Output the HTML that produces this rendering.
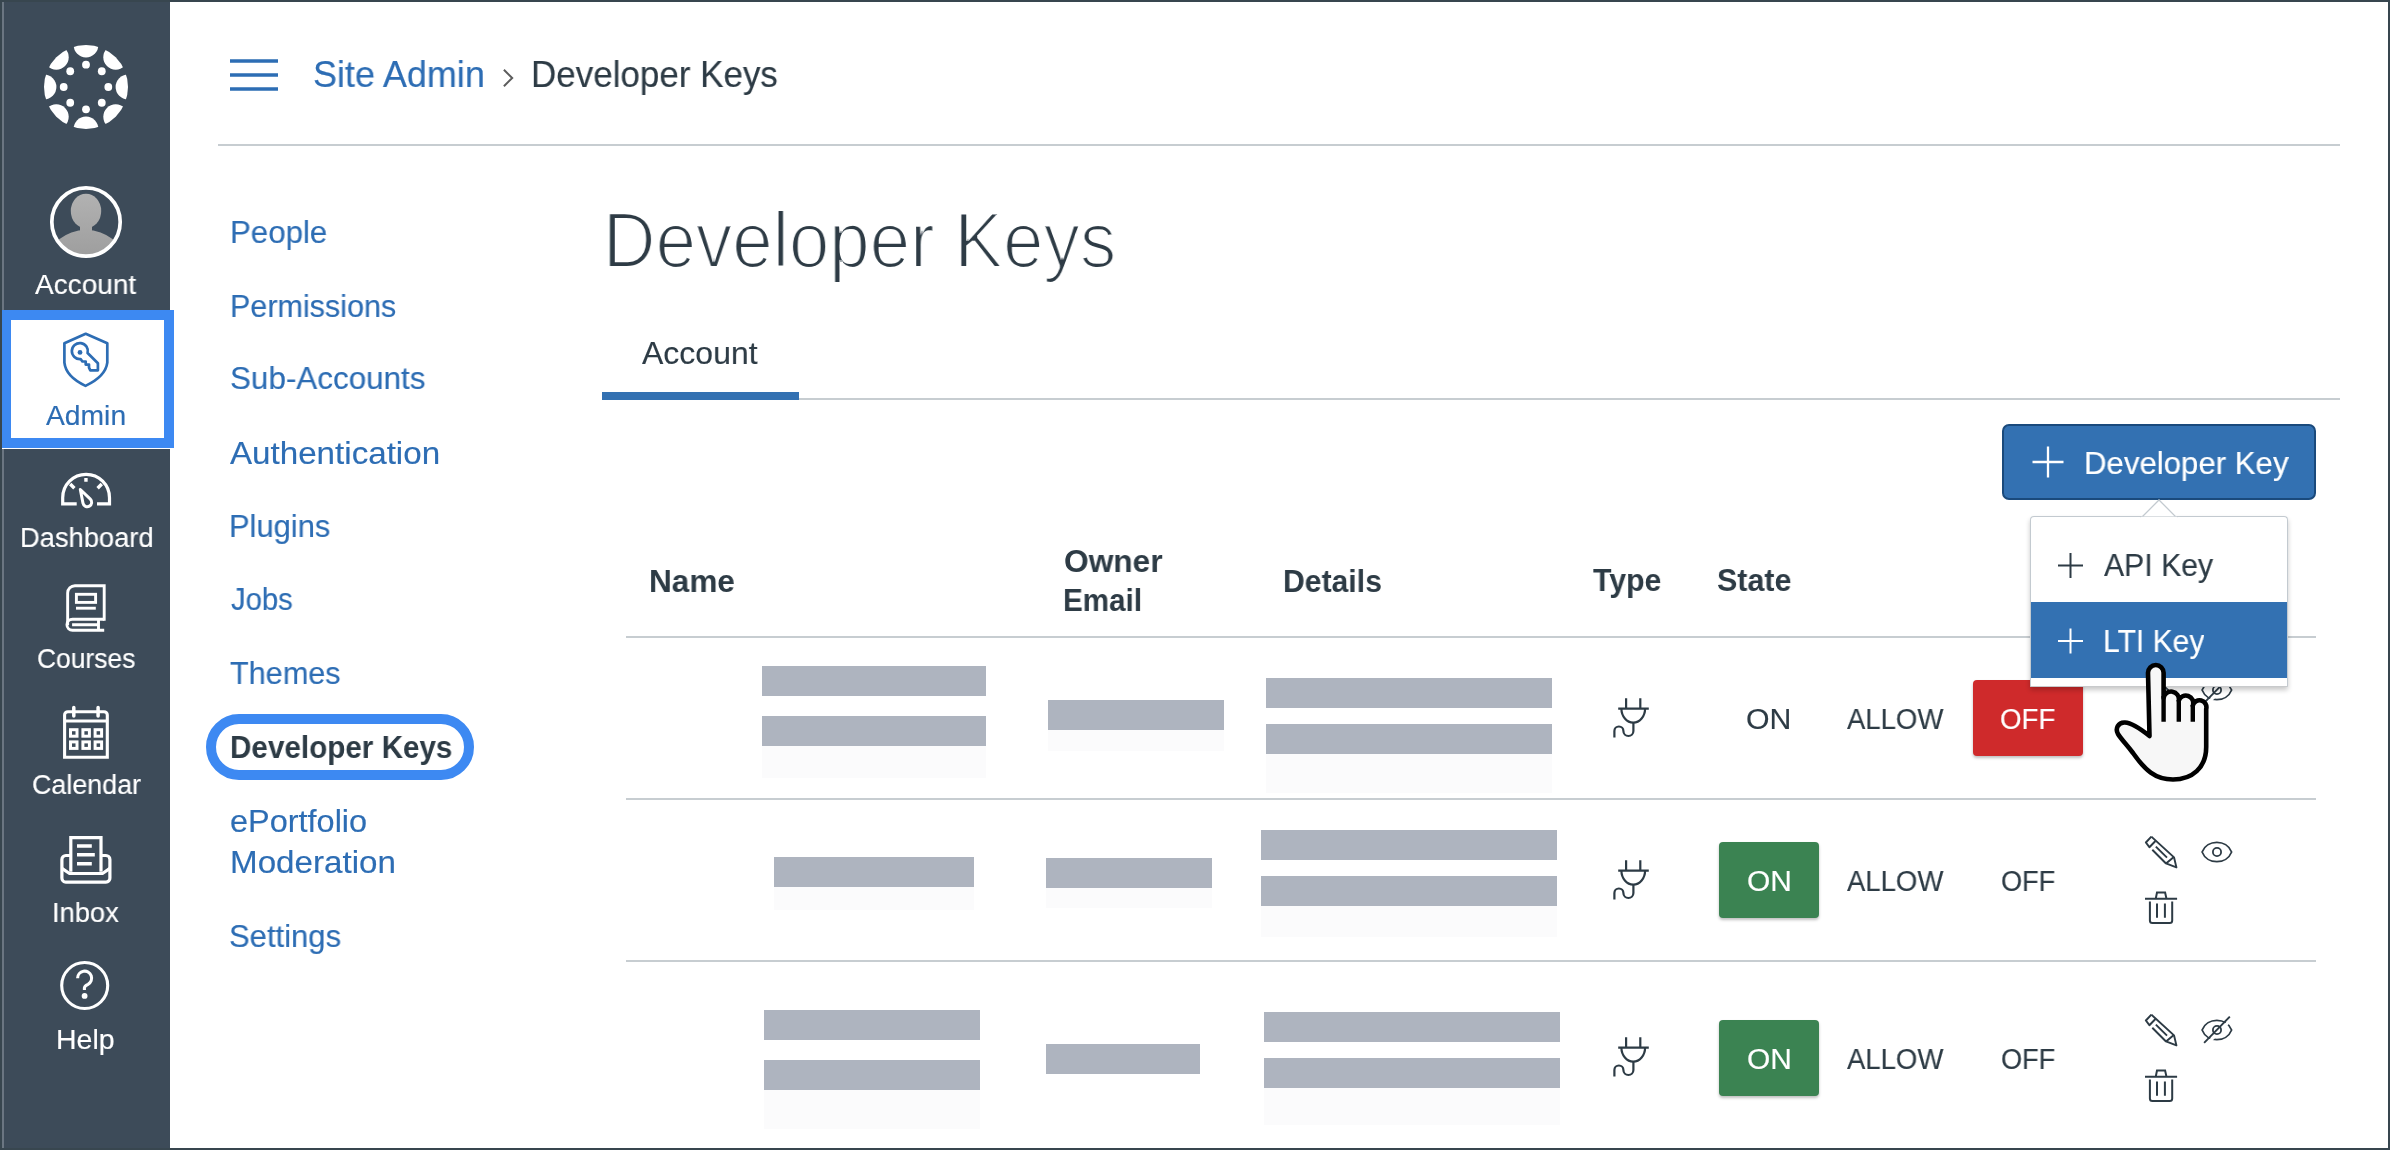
<!DOCTYPE html><html><head><meta charset="utf-8"><style>
html,body{margin:0;padding:0;}
body{width:2390px;height:1150px;position:relative;overflow:hidden;background:#fff;font-family:"Liberation Sans",sans-serif;}
.t{position:absolute;white-space:pre;transform-origin:0 0;will-change:transform;}
svg{position:absolute;overflow:visible;}
</style></head><body>
<svg width="0" height="0" style="position:absolute"><defs><filter id="erode1" x="-5%" y="-20%" width="110%" height="140%"><feMorphology operator="erode" radius="1"/></filter></defs></svg>
<div style="position:absolute;left:0px;top:0px;width:170px;height:1150px;background:#3D4B59;"></div>
<div style="position:absolute;left:2px;top:2px;width:2px;height:1146px;background:#6B7682;"></div>
<div style="position:absolute;left:1px;top:310px;width:173px;height:139px;background:#fff;"></div>
<div style="position:absolute;left:1px;top:310px;width:153px;height:118px;border:10px solid #3D89F2;"></div>
<svg style="left:44px;top:45px" width="84" height="84" viewBox="-42 -42 84 84"><defs><clipPath id="lc"><circle r="42"/></clipPath></defs><g fill="#fff" clip-path="url(#lc)"><circle cx="42.000" cy="0.000" r="12.4"/><circle cx="29.698" cy="29.698" r="12.4"/><circle cx="0.000" cy="42.000" r="12.4"/><circle cx="-29.698" cy="29.698" r="12.4"/><circle cx="-42.000" cy="0.000" r="12.4"/><circle cx="-29.698" cy="-29.698" r="12.4"/><circle cx="-0.000" cy="-42.000" r="12.4"/><circle cx="29.698" cy="-29.698" r="12.4"/></g><g fill="#fff"><circle cx="22.300" cy="0.000" r="3.9"/><circle cx="15.768" cy="15.768" r="3.9"/><circle cx="0.000" cy="22.300" r="3.9"/><circle cx="-15.768" cy="15.768" r="3.9"/><circle cx="-22.300" cy="0.000" r="3.9"/><circle cx="-15.768" cy="-15.768" r="3.9"/><circle cx="-0.000" cy="-22.300" r="3.9"/><circle cx="15.768" cy="-15.768" r="3.9"/></g></svg>
<svg style="left:46px;top:182px" width="80" height="80" viewBox="46 182 80 80">
<defs><clipPath id="av"><circle cx="86" cy="222" r="33"/></clipPath><linearGradient id="avg" x1="0" y1="192" x2="0" y2="256" gradientUnits="userSpaceOnUse"><stop offset="0" stop-color="#B2B2B2"/><stop offset="1" stop-color="#9E9E9E"/></linearGradient></defs>
<g clip-path="url(#av)" fill="url(#avg)"><ellipse cx="86" cy="211" rx="15.2" ry="17.3"/><rect x="80" y="222" width="12" height="10"/><ellipse cx="86" cy="262" rx="38" ry="32"/></g>
<circle cx="86" cy="222" r="34.2" fill="none" stroke="#fff" stroke-width="3.7"/></svg>
<svg style="left:55px;top:325px" width="63" height="70" viewBox="0 0 63 70" fill="none" stroke="#2D6DB4" stroke-width="2.7" stroke-linejoin="round">
<path d="M30.7 8.8 L9.4 18.3 V37.7 C10.5 48 18 55 30.5 60.9 C43 55 51 48 52.3 37.7 V18.3 Z"/>
<path d="M32.6 28 A8 8 0 1 0 25.6 34 L27.4 36.5 H30.7 V39.6 H34 V42.6 L35.3 45.3 H42.9 V38.3 Z"/>
<circle cx="25" cy="27.4" r="2.4" fill="#2D6DB4" stroke="none"/>
</svg>
<svg style="left:55px;top:465px" width="63" height="50" viewBox="0 0 63 50" fill="none" stroke="#fff" stroke-width="3.2">
<path d="M21.7 38.9 H7.7 V32.7 A23.4 23.4 0 0 1 54.5 32.7 V38.9 H42"/>
<path d="M30.95 13 V16.8 M15.2 19.0 L19.4 23.2 M46.8 19.0 L42.6 23.2" stroke-width="3.4"/>
<path d="M25.3 24.5 L35.34 34.12 A4.4 4.4 0 1 1 27.98 38.15 Z" stroke-linejoin="round" stroke-width="3"/>
</svg>
<svg style="left:58px;top:578px" width="56" height="60" viewBox="0 0 56 60" fill="none" stroke="#fff" stroke-width="2.9">
<path d="M46.2 42.8 V7.7 H17 A7.3 7.3 0 0 0 9.65 15 V47"/>
<path d="M46.2 41.2 H14.5 A5.5 5.5 0 0 0 14.5 52.3 H46.2"/>
<path d="M14.1 46.8 H39.1 M40.5 41.2 V52.3"/>
<rect x="18.4" y="16.3" width="19.2" height="8.1"/>
<path d="M18 30.2 H37.8"/>
</svg>
<svg style="left:56px;top:700px" width="60" height="65" viewBox="0 0 60 65" fill="none" stroke="#fff" stroke-width="3.1">
<path d="M8.6 57.2 V15 A3.3 3.3 0 0 1 11.9 11.7 H48 A3.3 3.3 0 0 1 51.3 15 V57.2 Z"/>
<path d="M8.6 21 H51.3"/>
<path d="M17.8 7.6 V16 M42.1 7.6 V16" stroke-width="3.5" stroke-linecap="round"/>
<g stroke-width="3"><rect x="14.50" y="29.70" width="6.5" height="6.5"/><rect x="14.50" y="41.90" width="6.5" height="6.5"/><rect x="26.90" y="29.70" width="6.5" height="6.5"/><rect x="26.90" y="41.90" width="6.5" height="6.5"/><rect x="39.10" y="29.70" width="6.5" height="6.5"/><rect x="39.10" y="41.90" width="6.5" height="6.5"/></g>
</svg>
<svg style="left:56px;top:828px" width="60" height="62" viewBox="0 0 60 62" fill="none" stroke="#fff" stroke-width="3.2">
<path d="M14.8 43.7 V9.7 H45 V43.7"/>
<path d="M21 17.9 H35.8 M21 26.8 H38.8 M21 35.7 H35.8" stroke-width="3.5"/>
<path d="M14.8 27.5 H10 A4 4 0 0 0 5.9 31.5 V50 A4 4 0 0 0 10 54.2 H49.9 A4 4 0 0 0 53.9 50 V31.5 A4 4 0 0 0 49.9 27.5 H45"/>
<path d="M5.9 40.4 L13.5 45.5 H46.5 L53.9 40.4"/>
</svg>
<svg style="left:56px;top:956px" width="58" height="60" viewBox="0 0 58 60" fill="none" stroke="#fff" stroke-width="3.1">
<circle cx="28.7" cy="29.5" r="23"/>
<path d="M21.6 22.2 A7 7 0 1 1 32 28.3 C29.5 29.5 28.4 30.5 28.4 32 V34"/>
<circle cx="28.6" cy="39.9" r="2.9" fill="#fff" stroke="none"/>
</svg>
<svg style="left:0;top:0" width="600" height="160" viewBox="0 0 600 160">
<path d="M230 61 H278 M230 75 H278 M230 89 H278" stroke="#2D6DB4" stroke-width="3.3"/>
<path d="M503.9 69.7 L512.2 78 L503.9 86.3" fill="none" stroke="#5C5C5C" stroke-width="2"/>
</svg>
<div style="position:absolute;left:218px;top:144px;width:2122px;height:2px;background:#C7CDD1;"></div>
<div style="position:absolute;left:602px;top:398px;width:1738px;height:2px;background:#C7CDD1;"></div>
<div style="position:absolute;left:602px;top:392px;width:197px;height:8px;background:#3371B2;"></div>
<div style="position:absolute;left:2002px;top:424px;width:310px;height:72px;border:2px solid #1A4A7C;border-radius:7px;background:#3371B2"></div>
<svg style="left:2028px;top:442px" width="40" height="40" viewBox="2028 442 40 40"><path d="M2032.5 462 H2063.5 M2048 446.5 V477.5" stroke="#fff" stroke-width="2.3"/></svg>
<div style="position:absolute;left:626px;top:636px;width:1690px;height:2px;background:#C7CDD1;"></div>
<div style="position:absolute;left:626px;top:798px;width:1690px;height:2px;background:#C7CDD1;"></div>
<div style="position:absolute;left:626px;top:960px;width:1690px;height:2px;background:#C7CDD1;"></div>
<div style="position:absolute;left:762px;top:746px;width:224px;height:32px;background:#FBFBFC;"></div>
<div style="position:absolute;left:1048px;top:730px;width:176px;height:21px;background:#FBFBFC;"></div>
<div style="position:absolute;left:1266px;top:754px;width:286px;height:39px;background:#FBFBFC;"></div>
<div style="position:absolute;left:774px;top:887px;width:200px;height:23px;background:#FBFBFC;"></div>
<div style="position:absolute;left:1046px;top:888px;width:166px;height:20px;background:#FBFBFC;"></div>
<div style="position:absolute;left:1261px;top:906px;width:296px;height:31px;background:#FBFBFC;"></div>
<div style="position:absolute;left:764px;top:1090px;width:216px;height:39px;background:#FBFBFC;"></div>
<div style="position:absolute;left:1264px;top:1088px;width:296px;height:37px;background:#FBFBFC;"></div>
<div style="position:absolute;left:762px;top:666px;width:224px;height:30px;background:#AEB4BF;"></div>
<div style="position:absolute;left:762px;top:716px;width:224px;height:30px;background:#AEB4BF;"></div>
<div style="position:absolute;left:1048px;top:700px;width:176px;height:30px;background:#AEB4BF;"></div>
<div style="position:absolute;left:1266px;top:678px;width:286px;height:30px;background:#AEB4BF;"></div>
<div style="position:absolute;left:1266px;top:724px;width:286px;height:30px;background:#AEB4BF;"></div>
<div style="position:absolute;left:774px;top:857px;width:200px;height:30px;background:#AEB4BF;"></div>
<div style="position:absolute;left:1046px;top:858px;width:166px;height:30px;background:#AEB4BF;"></div>
<div style="position:absolute;left:1261px;top:830px;width:296px;height:30px;background:#AEB4BF;"></div>
<div style="position:absolute;left:1261px;top:876px;width:296px;height:30px;background:#AEB4BF;"></div>
<div style="position:absolute;left:764px;top:1010px;width:216px;height:30px;background:#AEB4BF;"></div>
<div style="position:absolute;left:764px;top:1060px;width:216px;height:30px;background:#AEB4BF;"></div>
<div style="position:absolute;left:1046px;top:1044px;width:154px;height:30px;background:#AEB4BF;"></div>
<div style="position:absolute;left:1264px;top:1012px;width:296px;height:30px;background:#AEB4BF;"></div>
<div style="position:absolute;left:1264px;top:1058px;width:296px;height:30px;background:#AEB4BF;"></div>
<svg style="left:1600px;top:687.7px" width="60" height="60" viewBox="0 0 60 60" fill="none" stroke="#2D3B45" stroke-width="2.2">
<path d="M26.1 10.2 V20.6 M40.3 10.2 V20.6 M18.2 20.6 H48.8"/>
<path d="M21.4 20.6 A11.85 14.1 0 0 0 45.1 20.6"/>
<path d="M33.4 34.7 V43 A5 5 0 0 1 23.4 43 A4.5 4.5 0 0 0 14.4 43 V49.6"/>
</svg>
<svg style="left:1600px;top:850px" width="60" height="60" viewBox="0 0 60 60" fill="none" stroke="#2D3B45" stroke-width="2.2">
<path d="M26.1 10.2 V20.6 M40.3 10.2 V20.6 M18.2 20.6 H48.8"/>
<path d="M21.4 20.6 A11.85 14.1 0 0 0 45.1 20.6"/>
<path d="M33.4 34.7 V43 A5 5 0 0 1 23.4 43 A4.5 4.5 0 0 0 14.4 43 V49.6"/>
</svg>
<svg style="left:1600px;top:1027.1px" width="60" height="60" viewBox="0 0 60 60" fill="none" stroke="#2D3B45" stroke-width="2.2">
<path d="M26.1 10.2 V20.6 M40.3 10.2 V20.6 M18.2 20.6 H48.8"/>
<path d="M21.4 20.6 A11.85 14.1 0 0 0 45.1 20.6"/>
<path d="M33.4 34.7 V43 A5 5 0 0 1 23.4 43 A4.5 4.5 0 0 0 14.4 43 V49.6"/>
</svg>
<div style="position:absolute;left:1973px;top:680px;width:110px;height:76px;background:#CF2A2B;border-radius:4px;box-shadow:0 2px 3px rgba(0,0,0,.25)"></div>
<div style="position:absolute;left:1719px;top:842px;width:100px;height:76px;background:#3B8352;border-radius:4px;box-shadow:0 2px 3px rgba(0,0,0,.25)"></div>
<div style="position:absolute;left:1719px;top:1020px;width:100px;height:76px;background:#3B8352;border-radius:4px;box-shadow:0 2px 3px rgba(0,0,0,.25)"></div>
<svg style="left:2135px;top:663px" width="110" height="110" viewBox="0 0 110 110" fill="none" stroke="#2D3B45" stroke-width="2"><g stroke-width="1.95" stroke-linejoin="round"><path d="M16.35 11.65 L39.04 32.39 L41.4 42.4 L31 38.45 L17.3 24.8"/><path d="M16.35 11.65 L10.87 17.5 L14.4 22.2 L20.45 15.95 M31 38.45 L38.5 32.2 M20.85 21.6 L32 32.6"/></g><path d="M67.1 27 C72 14.2 91.7 14.2 96.6 27 C91.7 39.8 72 39.8 67.1 27 Z" stroke-width="1.8"/><path d="M71.1 41.86 L96.85 15.56" stroke="#fff" stroke-width="3.2"/><circle cx="82" cy="27" r="4.1" stroke-width="1.8"/><path d="M69.1 39.9 L94.85 13.6" stroke-width="1.9"/><path d="M10 73.7 H42.1 M20.8 73.4 L22 67.6 H30.1 L31.4 73.4"/><path d="M14.9 76.5 V95.5 A2.5 2.5 0 0 0 17.4 98 H34.7 A2.5 2.5 0 0 0 37.2 95.5 V76.5 M22 78.5 V92.8 M29.9 78.5 V92.8"/></svg>
<svg style="left:2135px;top:825px" width="110" height="110" viewBox="0 0 110 110" fill="none" stroke="#2D3B45" stroke-width="2"><g stroke-width="1.95" stroke-linejoin="round"><path d="M16.35 11.65 L39.04 32.39 L41.4 42.4 L31 38.45 L17.3 24.8"/><path d="M16.35 11.65 L10.87 17.5 L14.4 22.2 L20.45 15.95 M31 38.45 L38.5 32.2 M20.85 21.6 L32 32.6"/></g><path d="M67.1 27 C72 14.2 91.7 14.2 96.6 27 C91.7 39.8 72 39.8 67.1 27 Z" stroke-width="1.8"/><circle cx="82" cy="27" r="4.1" stroke-width="1.8"/><path d="M10 73.7 H42.1 M20.8 73.4 L22 67.6 H30.1 L31.4 73.4"/><path d="M14.9 76.5 V95.5 A2.5 2.5 0 0 0 17.4 98 H34.7 A2.5 2.5 0 0 0 37.2 95.5 V76.5 M22 78.5 V92.8 M29.9 78.5 V92.8"/></svg>
<svg style="left:2135px;top:1003px" width="110" height="110" viewBox="0 0 110 110" fill="none" stroke="#2D3B45" stroke-width="2"><g stroke-width="1.95" stroke-linejoin="round"><path d="M16.35 11.65 L39.04 32.39 L41.4 42.4 L31 38.45 L17.3 24.8"/><path d="M16.35 11.65 L10.87 17.5 L14.4 22.2 L20.45 15.95 M31 38.45 L38.5 32.2 M20.85 21.6 L32 32.6"/></g><path d="M67.1 27 C72 14.2 91.7 14.2 96.6 27 C91.7 39.8 72 39.8 67.1 27 Z" stroke-width="1.8"/><path d="M71.1 41.86 L96.85 15.56" stroke="#fff" stroke-width="3.2"/><circle cx="82" cy="27" r="4.1" stroke-width="1.8"/><path d="M69.1 39.9 L94.85 13.6" stroke-width="1.9"/><path d="M10 73.7 H42.1 M20.8 73.4 L22 67.6 H30.1 L31.4 73.4"/><path d="M14.9 76.5 V95.5 A2.5 2.5 0 0 0 17.4 98 H34.7 A2.5 2.5 0 0 0 37.2 95.5 V76.5 M22 78.5 V92.8 M29.9 78.5 V92.8"/></svg>
<div class="t" style="left:34.90px;top:271px;font:400 28.13px/28.13px 'Liberation Sans',sans-serif;color:#FFFFFF;-webkit-text-stroke:0.15px #FFFFFF;transform:scaleX(0.9951)">Account</div>
<div class="t" style="left:46.30px;top:402px;font:400 28.13px/28.13px 'Liberation Sans',sans-serif;color:#2D6DB4;-webkit-text-stroke:0.15px #2D6DB4;transform:scaleX(1.0051)">Admin</div>
<div class="t" style="left:19.56px;top:524px;font:400 28.13px/28.13px 'Liberation Sans',sans-serif;color:#FFFFFF;-webkit-text-stroke:0.15px #FFFFFF;transform:scaleX(0.9709)">Dashboard</div>
<div class="t" style="left:36.76px;top:645px;font:400 28.13px/28.13px 'Liberation Sans',sans-serif;color:#FFFFFF;-webkit-text-stroke:0.15px #FFFFFF;transform:scaleX(0.9388)">Courses</div>
<div class="t" style="left:31.55px;top:771px;font:400 28.13px/28.13px 'Liberation Sans',sans-serif;color:#FFFFFF;-webkit-text-stroke:0.15px #FFFFFF;transform:scaleX(0.9549)">Calendar</div>
<div class="t" style="left:51.86px;top:899px;font:400 28.13px/28.13px 'Liberation Sans',sans-serif;color:#FFFFFF;-webkit-text-stroke:0.15px #FFFFFF;transform:scaleX(0.9716)">Inbox</div>
<div class="t" style="left:56.37px;top:1026px;font:400 28.13px/28.13px 'Liberation Sans',sans-serif;color:#FFFFFF;-webkit-text-stroke:0.15px #FFFFFF;transform:scaleX(1.0127)">Help</div>
<div class="t" style="left:313.02px;top:57px;font:400 36.38px/36.38px 'Liberation Sans',sans-serif;color:#2D6DB4;-webkit-text-stroke:0.15px #2D6DB4;transform:scaleX(0.9882)">Site Admin</div>
<div class="t" style="left:530.62px;top:57px;font:400 36.38px/36.38px 'Liberation Sans',sans-serif;color:#2D3B45;-webkit-text-stroke:0.15px #2D3B45;transform:scaleX(0.9613)">Developer Keys</div>
<div class="t" style="left:229.75px;top:216px;font:400 32.01px/32.01px 'Liberation Sans',sans-serif;color:#2D6DB4;-webkit-text-stroke:0.15px #2D6DB4;transform:scaleX(0.9760)">People</div>
<div class="t" style="left:229.79px;top:290px;font:400 32.01px/32.01px 'Liberation Sans',sans-serif;color:#2D6DB4;-webkit-text-stroke:0.15px #2D6DB4;transform:scaleX(0.9538)">Permissions</div>
<div class="t" style="left:229.74px;top:362px;font:400 32.01px/32.01px 'Liberation Sans',sans-serif;color:#2D6DB4;-webkit-text-stroke:0.15px #2D6DB4;transform:scaleX(0.9811)">Sub-Accounts</div>
<div class="t" style="left:230.40px;top:437px;font:400 32.01px/32.01px 'Liberation Sans',sans-serif;color:#2D6DB4;-webkit-text-stroke:0.15px #2D6DB4;transform:scaleX(1.0358)">Authentication</div>
<div class="t" style="left:229.37px;top:510px;font:400 32.01px/32.01px 'Liberation Sans',sans-serif;color:#2D6DB4;-webkit-text-stroke:0.15px #2D6DB4;transform:scaleX(0.9647)">Plugins</div>
<div class="t" style="left:230.50px;top:583px;font:400 32.01px/32.01px 'Liberation Sans',sans-serif;color:#2D6DB4;-webkit-text-stroke:0.15px #2D6DB4;transform:scaleX(0.9149)">Jobs</div>
<div class="t" style="left:229.54px;top:657px;font:400 32.01px/32.01px 'Liberation Sans',sans-serif;color:#2D6DB4;-webkit-text-stroke:0.15px #2D6DB4;transform:scaleX(0.9570)">Themes</div>
<div class="t" style="left:230.45px;top:731px;font:700 32.01px/32.01px 'Liberation Sans',sans-serif;color:#2D3B45;transform:scaleX(0.9262)">Developer Keys</div>
<div class="t" style="left:230.29px;top:805px;font:400 32.01px/32.01px 'Liberation Sans',sans-serif;color:#2D6DB4;-webkit-text-stroke:0.15px #2D6DB4;transform:scaleX(1.0143)">ePortfolio</div>
<div class="t" style="left:229.93px;top:846px;font:400 32.01px/32.01px 'Liberation Sans',sans-serif;color:#2D6DB4;-webkit-text-stroke:0.15px #2D6DB4;transform:scaleX(1.0365)">Moderation</div>
<div class="t" style="left:229.36px;top:920px;font:400 32.01px/32.01px 'Liberation Sans',sans-serif;color:#2D6DB4;-webkit-text-stroke:0.15px #2D6DB4;transform:scaleX(0.9690)">Settings</div>
<div class="t" style="left:602.72px;top:201px;font:400 78.5px/78.5px 'Liberation Sans',sans-serif;color:#2D3B45;filter:url(#erode1);transform:scaleX(0.9260)">Developer Keys</div>
<div class="t" style="left:642.40px;top:337px;font:400 32.01px/32.01px 'Liberation Sans',sans-serif;color:#2D3B45;-webkit-text-stroke:0.15px #2D3B45;transform:scaleX(0.9991)">Account</div>
<div class="t" style="left:2084.25px;top:447px;font:400 32.01px/32.01px 'Liberation Sans',sans-serif;color:#FFFFFF;-webkit-text-stroke:0.15px #FFFFFF;transform:scaleX(0.9740)">Developer Key</div>
<div class="t" style="left:649.03px;top:565px;font:700 32.01px/32.01px 'Liberation Sans',sans-serif;color:#2D3B45;transform:scaleX(0.9857)">Name</div>
<div class="t" style="left:1064.01px;top:545px;font:700 32.01px/32.01px 'Liberation Sans',sans-serif;color:#2D3B45;transform:scaleX(0.9898)">Owner</div>
<div class="t" style="left:1063.15px;top:584px;font:700 32.01px/32.01px 'Liberation Sans',sans-serif;color:#2D3B45;transform:scaleX(0.9259)">Email</div>
<div class="t" style="left:1282.52px;top:565px;font:700 32.01px/32.01px 'Liberation Sans',sans-serif;color:#2D3B45;transform:scaleX(0.9422)">Details</div>
<div class="t" style="left:1593.40px;top:564px;font:700 32.01px/32.01px 'Liberation Sans',sans-serif;color:#2D3B45;transform:scaleX(0.9451)">Type</div>
<div class="t" style="left:1717.25px;top:564px;font:700 32.01px/32.01px 'Liberation Sans',sans-serif;color:#2D3B45;transform:scaleX(0.9513)">State</div>
<div class="t" style="left:1746.26px;top:705px;font:400 29.0px/29.0px 'Liberation Sans',sans-serif;color:#2D3B45;-webkit-text-stroke:0.15px #2D3B45;transform:scaleX(1.0425)">ON</div>
<div class="t" style="left:1847.00px;top:705px;font:400 29.0px/29.0px 'Liberation Sans',sans-serif;color:#2D3B45;-webkit-text-stroke:0.15px #2D3B45;transform:scaleX(0.9490)">ALLOW</div>
<div class="t" style="left:1999.84px;top:705px;font:400 29.0px/29.0px 'Liberation Sans',sans-serif;color:#FFFFFF;-webkit-text-stroke:0.15px #FFFFFF;transform:scaleX(0.9554)">OFF</div>
<div class="t" style="left:1746.67px;top:867px;font:400 29.0px/29.0px 'Liberation Sans',sans-serif;color:#FFFFFF;-webkit-text-stroke:0.15px #FFFFFF;transform:scaleX(1.0325)">ON</div>
<div class="t" style="left:1847.00px;top:867px;font:400 29.0px/29.0px 'Liberation Sans',sans-serif;color:#2D3B45;-webkit-text-stroke:0.15px #2D3B45;transform:scaleX(0.9490)">ALLOW</div>
<div class="t" style="left:2000.56px;top:867px;font:400 29.0px/29.0px 'Liberation Sans',sans-serif;color:#2D3B45;-webkit-text-stroke:0.15px #2D3B45;transform:scaleX(0.9357)">OFF</div>
<div class="t" style="left:1746.67px;top:1045px;font:400 29.0px/29.0px 'Liberation Sans',sans-serif;color:#FFFFFF;-webkit-text-stroke:0.15px #FFFFFF;transform:scaleX(1.0325)">ON</div>
<div class="t" style="left:1847.00px;top:1045px;font:400 29.0px/29.0px 'Liberation Sans',sans-serif;color:#2D3B45;-webkit-text-stroke:0.15px #2D3B45;transform:scaleX(0.9490)">ALLOW</div>
<div class="t" style="left:2000.56px;top:1045px;font:400 29.0px/29.0px 'Liberation Sans',sans-serif;color:#2D3B45;-webkit-text-stroke:0.15px #2D3B45;transform:scaleX(0.9357)">OFF</div>
<div style="position:absolute;left:206px;top:714px;width:248px;height:46px;border:10px solid #3D89F2;border-radius:33px;"></div>
<div style="position:absolute;left:2030px;top:516px;width:256px;height:169px;background:#fff;border:1px solid #C3CAD0;border-bottom-color:#C8CACC;border-radius:4px 4px 1px 1px;box-shadow:0 3px 5px rgba(0,0,0,.22)"></div>
<svg style="left:2138px;top:496px" width="42" height="24" viewBox="2138 496 42 24"><path d="M2142 517 L2159 500 L2176 517 Z" fill="#fff" stroke="#C3CAD0" stroke-width="1.3"/><rect x="2141" y="516.8" width="36" height="3" fill="#fff"/></svg>
<div style="position:absolute;left:2031px;top:601.5px;width:256px;height:76px;background:#3371B2;"></div>
<svg style="left:2050px;top:545px" width="40" height="110" viewBox="2050 545 40 110"><path d="M2058 565.5 H2083 M2070.5 553 V578" stroke="#2D3B45" stroke-width="2"/><path d="M2058 641 H2083 M2070.5 628.5 V653.5" stroke="#fff" stroke-width="2"/></svg>
<div class="t" style="left:2103.50px;top:549px;font:400 32.01px/32.01px 'Liberation Sans',sans-serif;color:#2D3B45;-webkit-text-stroke:0.15px #2D3B45;transform:scaleX(0.9440)">API Key</div>
<div class="t" style="left:2102.82px;top:625px;font:400 32.01px/32.01px 'Liberation Sans',sans-serif;color:#FFFFFF;-webkit-text-stroke:0.15px #FFFFFF;transform:scaleX(0.9396)">LTI Key</div>
<svg style="left:2100px;top:650px" width="150" height="140" viewBox="0 0 150 140">
<path d="M49.5 86 L48 22.8 A7.8 7.8 0 0 1 63.6 22.8 V48 A7.6 7.6 0 0 1 78.8 50.5 A7 7 0 0 1 92.8 55.5 A6.7 6.7 0 0 1 106.2 59 V97 C106.2 118 92 129.5 73 129.5 C55 129.5 45 120 33 103 C27 95 21 89 18 84 C15 79 18 72 25 72.5 C33 73 42 80 49.5 86 Z" fill="#F7F7F7" stroke="#000" stroke-width="4.6" stroke-linejoin="round"/>
<path d="M63.6 46 V71.8 M78.8 50 V71.8 M92.8 55 V71.8" stroke="#000" stroke-width="4.4"/>
</svg>
<div style="position:absolute;left:0;top:0;width:2386px;height:1146px;border:2px solid #38464F;pointer-events:none"></div>
</body></html>
